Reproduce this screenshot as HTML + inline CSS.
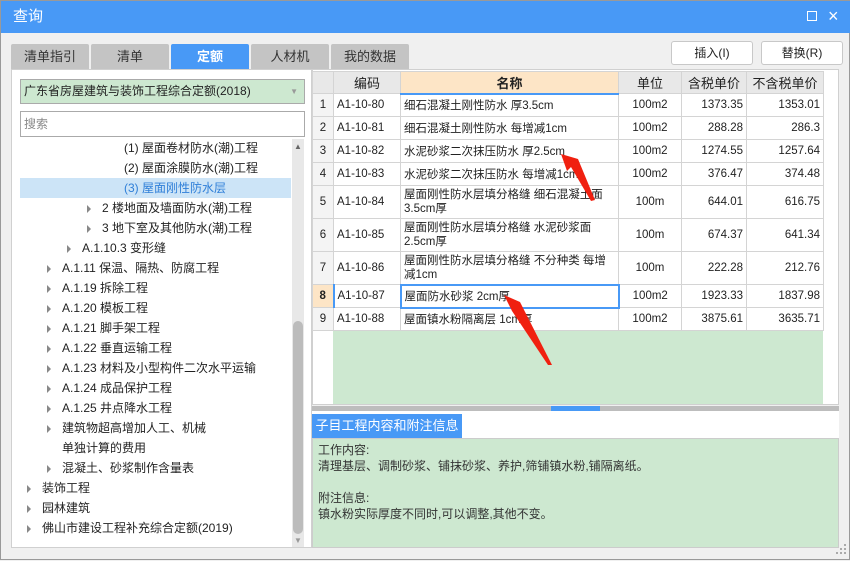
<!DOCTYPE html>
<html><head><meta charset="utf-8"><style>
*{box-sizing:border-box;margin:0;padding:0}
body{width:850px;height:560px;background:#f0f0f0;font-family:"Liberation Sans","Noto Sans CJK SC",sans-serif;font-size:12px;color:#222;position:relative;overflow:hidden;border:1px solid #999}
.abs{position:absolute}
.title{left:0;top:0;width:850px;height:32px;background:#4899f6;color:#fff;font-size:15px;line-height:32px;padding-left:12px}
.tab{top:43px;height:25px;width:78px;background:#c4c4c4;text-align:center;line-height:25px;font-size:13px;color:#333;border-radius:2px 2px 0 0}
.btn{top:40px;height:24px;width:82px;background:#fff;border:1px solid #c8c8c8;border-radius:3px;text-align:center;line-height:22px;font-size:12px}
.tree div{position:absolute;height:20px;line-height:20px;font-size:12px;white-space:nowrap}
.tri{position:absolute;width:0;height:0;border-left:4px solid #888;border-top:4px solid transparent;border-bottom:4px solid transparent}
table{border-collapse:collapse;position:absolute;left:311px;top:70px;font-size:11.5px}
td{border:1px solid #d4d4d4;background:#fff;padding:0 3px;white-space:nowrap}
th{border:1px solid #d4d4d4;background:#e8e8e8;font-weight:normal;font-size:13px;height:22px}
td.n{text-align:center;background:#f4f4f4;padding:0}
td.r{text-align:right}
td.c{text-align:center}
</style></head><body>
<div class="abs title">查询</div>
<div class="abs" style="left:806px;top:10px;width:10px;height:10px;border:1.5px solid #fff"></div>
<div class="abs" style="left:827px;top:4px;color:#fff;font-size:18px;line-height:22px">×</div>

<div class="abs tab" style="left:10px">清单指引</div>
<div class="abs tab" style="left:90px">清单</div>
<div class="abs tab" style="left:170px;background:#4899f6;color:#fff;font-weight:bold">定额</div>
<div class="abs tab" style="left:250px">人材机</div>
<div class="abs tab" style="left:330px">我的数据</div>
<div class="abs btn" style="left:670px">插入(I)</div>
<div class="abs btn" style="left:760px">替换(R)</div>

<div class="abs" style="left:10px;top:68px;width:301px;height:479px;background:#fff;border:1px solid #d0d0d0"></div>
<div class="abs" style="left:19px;top:78px;width:285px;height:25px;background:#cde8d0;border:1px solid #aaa;line-height:23px;padding-left:3px;font-size:12px">广东省房屋建筑与装饰工程综合定额(2018)<span style="position:absolute;right:6px;top:0;color:#999;font-size:8px">▼</span></div>
<div class="abs" style="left:19px;top:110px;width:285px;height:26px;background:#fff;border:1px solid #aaa;line-height:24px;padding-left:3px;color:#888;font-size:12px">搜索</div>
<div class="abs" style="left:19px;top:177px;width:271px;height:20px;background:#cce4f7"></div>
<div class="abs" style="left:291px;top:138px;width:12px;height:408px;background:#e8e8e8"></div>
<div class="abs" style="left:292px;top:320px;width:10px;height:213px;background:#bcbcbc;border-radius:5px"></div>
<div class="abs" style="left:293px;top:141px;color:#666;font-size:8px">▲</div>
<div class="abs" style="left:293px;top:535px;color:#999;font-size:8px">▼</div>
<div class="tree">
<div style="left:123px;top:137px">(1) 屋面卷材防水(潮)工程</div>
<div style="left:123px;top:157px">(2) 屋面涂膜防水(潮)工程</div>
<div style="left:123px;top:177px;color:#2f7fd8">(3) 屋面刚性防水层</div>
<span class="tri" style="left:86px;top:204px"></span><div style="left:101px;top:197px">2 楼地面及墙面防水(潮)工程</div>
<span class="tri" style="left:86px;top:224px"></span><div style="left:101px;top:217px">3 地下室及其他防水(潮)工程</div>
<span class="tri" style="left:66px;top:244px"></span><div style="left:81px;top:237px">A.1.10.3 变形缝</div>
<span class="tri" style="left:46px;top:264px"></span><div style="left:61px;top:257px">A.1.11 保温、隔热、防腐工程</div>
<span class="tri" style="left:46px;top:284px"></span><div style="left:61px;top:277px">A.1.19 拆除工程</div>
<span class="tri" style="left:46px;top:304px"></span><div style="left:61px;top:297px">A.1.20 模板工程</div>
<span class="tri" style="left:46px;top:324px"></span><div style="left:61px;top:317px">A.1.21 脚手架工程</div>
<span class="tri" style="left:46px;top:344px"></span><div style="left:61px;top:337px">A.1.22 垂直运输工程</div>
<span class="tri" style="left:46px;top:364px"></span><div style="left:61px;top:357px">A.1.23 材料及小型构件二次水平运输</div>
<span class="tri" style="left:46px;top:384px"></span><div style="left:61px;top:377px">A.1.24 成品保护工程</div>
<span class="tri" style="left:46px;top:404px"></span><div style="left:61px;top:397px">A.1.25 井点降水工程</div>
<span class="tri" style="left:46px;top:424px"></span><div style="left:61px;top:417px">建筑物超高增加人工、机械</div>
<div style="left:61px;top:437px">单独计算的费用</div>
<span class="tri" style="left:46px;top:464px"></span><div style="left:61px;top:457px">混凝土、砂浆制作含量表</div>
<span class="tri" style="left:26px;top:484px"></span><div style="left:41px;top:477px">装饰工程</div>
<span class="tri" style="left:26px;top:504px"></span><div style="left:41px;top:497px">园林建筑</div>
<span class="tri" style="left:26px;top:524px"></span><div style="left:41px;top:517px">佛山市建设工程补充综合定额(2019)</div>
</div>

<div class="abs" style="left:311px;top:68px;width:527px;height:336px;background:#fff;border:1px solid #d0d0d0"></div>
<div class="abs" style="left:332px;top:92px;width:490px;height:311px;background:#cde8d0"></div>
<table>
<tr><th style="width:21px"></th><th style="width:67px">编码</th><th style="width:218px;background:#fde5c6;font-weight:bold;border-bottom:2px solid #4899f6">名称</th><th style="width:63px">单位</th><th style="width:65px">含税单价</th><th style="width:77px">不含税单价</th></tr>
<tr style="height:23px"><td class="n">1</td><td>A1-10-80</td><td>细石混凝土刚性防水 厚3.5cm</td><td class="c">100m2</td><td class="r">1373.35</td><td class="r">1353.01</td></tr>
<tr style="height:23px"><td class="n">2</td><td>A1-10-81</td><td>细石混凝土刚性防水 每增减1cm</td><td class="c">100m2</td><td class="r">288.28</td><td class="r">286.3</td></tr>
<tr style="height:23px"><td class="n">3</td><td>A1-10-82</td><td>水泥砂浆二次抹压防水 厚2.5cm</td><td class="c">100m2</td><td class="r">1274.55</td><td class="r">1257.64</td></tr>
<tr style="height:23px"><td class="n">4</td><td>A1-10-83</td><td>水泥砂浆二次抹压防水 每增减1cm</td><td class="c">100m2</td><td class="r">376.47</td><td class="r">374.48</td></tr>
<tr style="height:33px"><td class="n">5</td><td>A1-10-84</td><td style="white-space:normal;line-height:14px">屋面刚性防水层填分格缝 细石混凝土面3.5cm厚</td><td class="c">100m</td><td class="r">644.01</td><td class="r">616.75</td></tr>
<tr style="height:33px"><td class="n">6</td><td>A1-10-85</td><td style="white-space:normal;line-height:14px">屋面刚性防水层填分格缝 水泥砂浆面2.5cm厚</td><td class="c">100m</td><td class="r">674.37</td><td class="r">641.34</td></tr>
<tr style="height:33px"><td class="n">7</td><td>A1-10-86</td><td style="white-space:normal;line-height:14px">屋面刚性防水层填分格缝 不分种类 每增减1cm</td><td class="c">100m</td><td class="r">222.28</td><td class="r">212.76</td></tr>
<tr style="height:23px"><td class="n" style="background:#fde5c6;font-weight:bold;border-right:2px solid #4899f6">8</td><td>A1-10-87</td><td style="border:2px solid #4899f6">屋面防水砂浆 2cm厚</td><td class="c">100m2</td><td class="r">1923.33</td><td class="r">1837.98</td></tr>
<tr style="height:23px"><td class="n">9</td><td>A1-10-88</td><td>屋面镇水粉隔离层 1cm厚</td><td class="c">100m2</td><td class="r">3875.61</td><td class="r">3635.71</td></tr>
</table>

<div class="abs" style="left:311px;top:405px;width:527px;height:5px;background:#bdbdbd"></div>
<div class="abs" style="left:550px;top:405px;width:49px;height:5px;background:#4899f6"></div>
<div class="abs" style="left:311px;top:410px;width:527px;height:27px;background:#fff"></div>
<div class="abs" style="left:311px;top:413px;width:150px;height:24px;background:#4899f6;color:#fff;font-size:13px;line-height:24px;text-align:center">子目工程内容和附注信息</div>
<div class="abs" style="left:311px;top:437px;width:527px;height:110px;background:#cde8d0;border:1px solid #ccc;padding:3px 5px;line-height:16px;font-size:12px;color:#333">工作内容:<br>清理基层、调制砂浆、铺抹砂浆、养护,筛铺镇水粉,铺隔离纸。<br><br>附注信息:<br>镇水粉实际厚度不同时,可以调整,其他不变。</div>

<svg class="abs" style="left:0;top:0" width="850" height="560">
<polygon points="560,153 577,158 594,199 590,200 570,166 566,170" fill="#f02010"/>
<polygon points="503,294 519,301 551,364 547,364 511,310" fill="#f02010"/>
<g fill="#aaa"><rect x="839" y="547" width="2" height="2"/><rect x="843" y="547" width="2" height="2"/><rect x="843" y="543" width="2" height="2"/><rect x="839" y="551" width="2" height="2"/><rect x="843" y="551" width="2" height="2"/><rect x="835" y="551" width="2" height="2"/></g>
</svg>
</body></html>
